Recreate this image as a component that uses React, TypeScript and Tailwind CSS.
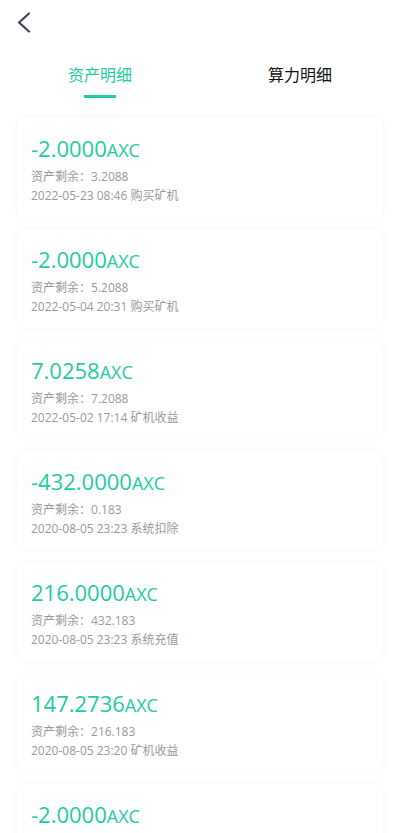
import React from 'react';

interface Record {
  amount: string;
  balance: string;
  time: string;
  kind: string;
}

const records: Record[] = [
  { amount: '-2.0000', balance: '3.2088', time: '2022-05-23 08:46', kind: '购买矿机' },
  { amount: '-2.0000', balance: '5.2088', time: '2022-05-04 20:31', kind: '购买矿机' },
  { amount: '7.0258', balance: '7.2088', time: '2022-05-02 17:14', kind: '矿机收益' },
  { amount: '-432.0000', balance: '0.183', time: '2020-08-05 23:23', kind: '系统扣除' },
  { amount: '216.0000', balance: '432.183', time: '2020-08-05 23:23', kind: '系统充值' },
  { amount: '147.2736', balance: '216.183', time: '2020-08-05 23:20', kind: '矿机收益' },
  { amount: '-2.0000', balance: '218.183', time: '2020-08-05 23:18', kind: '购买矿机' },
];

function RecordCard({ record }: { record: Record }) {
  return (
    <div className="bg-white rounded-[6px] shadow-[0_0_6px_rgba(0,0,0,0.04)] px-[14px] pt-[15px] pb-[11px]">
      <div className="h-[30px] leading-[30px] text-[#1ecba5] whitespace-nowrap">
        <span className="text-[22px]">{record.amount}</span>
        <span className="text-[18px]">AXC</span>
      </div>
      <div className="mt-[4px] h-[19px] text-[12px] leading-[19px] text-[#999999] whitespace-nowrap">
        资产剩余：{record.balance}
      </div>
      <div className="h-[20px] text-[12px] leading-[20px] text-[#999999] whitespace-nowrap">
        {record.time} {record.kind}
      </div>
    </div>
  );
}

export default function App() {
  return (
    <div
      className="w-[400px] min-h-[833px] bg-white"
      style={{ fontFamily: '"Open Sans", "Noto Sans CJK SC", sans-serif' }}
    >
      {/* Header with back button */}
      <div className="h-[45px] pl-[17px] pt-[12px]">
        <svg width="14" height="22" viewBox="0 0 14 22" fill="none">
          <path
            d="M12 1.5 L2 10.5 L12 19.5"
            stroke="#3d4256"
            strokeWidth="2.2"
            strokeLinecap="round"
            strokeLinejoin="round"
          />
        </svg>
      </div>

      {/* Tabs */}
      <div className="flex pt-[18px]">
        <div className="flex-1 flex flex-col items-center">
          <span className="h-[24px] text-[16px] leading-[24px] text-[#1ecba5]">资产明细</span>
          <span className="mt-[8px] w-[32px] h-[3px] bg-[#1ecba5]" />
        </div>
        <div className="flex-1 flex flex-col items-center">
          <span className="h-[24px] text-[16px] leading-[24px] text-[#111111]">算力明细</span>
        </div>
      </div>

      {/* Records */}
      <div className="flex flex-col gap-[12px] px-[17px] pt-[20px] pb-[12px]">
        {records.map((r, i) => (
          <RecordCard key={i} record={r} />
        ))}
      </div>
    </div>
  );
}
